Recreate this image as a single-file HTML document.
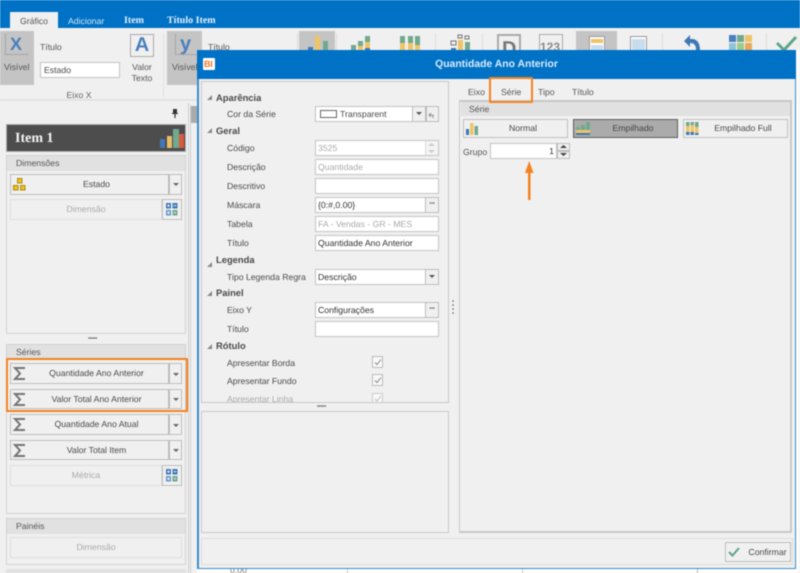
<!DOCTYPE html>
<html><head><meta charset="utf-8">
<style>
html,body{margin:0;padding:0}
body{width:800px;height:573px;overflow:hidden;background:#f0f0f0;position:relative;font:8.7px "Liberation Sans",sans-serif;color:#4a4a4a;text-rendering:geometricPrecision}
#w{position:absolute;left:0;top:0;width:800px;height:573px;overflow:hidden;filter:blur(.4px)}
.a,.t{position:absolute;box-sizing:border-box}
.t{white-space:nowrap;line-height:12px}
.c{text-align:center}
.b{font-weight:bold;font-size:9.4px}
.box{position:absolute;box-sizing:border-box;background:#fff;border:1px solid #c4c4c4;line-height:15px;padding-left:2px;white-space:nowrap}
.btn{position:absolute;box-sizing:border-box;background:#f0f0f0;border:1px solid #bcbcbc;text-align:center;white-space:nowrap}
.dis{color:#aaa}
.dots{line-height:13px!important;font-size:6px;letter-spacing:-.3px;color:#777}
svg{position:absolute;display:block}
</style></head><body><div id="w">

<!-- top -->
<div class="a" style="left:0;top:0;width:800px;height:28px;background:#0072c6"></div>
<div class="a" style="left:10px;top:12px;width:48px;height:17px;background:#f0f0f0"></div>
<div class="t c" style="left:10px;top:15px;width:48px;color:#555">Gráfico</div>
<div class="t" style="left:68px;top:15px;color:#cfe4f5">Adicionar</div>
<div class="t b" style="left:124px;top:15px;color:#e4f0fa;font-family:'Liberation Serif',serif;font-size:10px">Item</div>
<div class="t b" style="left:167px;top:15px;color:#e4f0fa;font-family:'Liberation Serif',serif;font-size:10px">Título Item</div>

<!-- ribbon -->
<div class="a" style="left:0;top:28px;width:800px;height:73px;background:#f0f0f0;border-bottom:2px solid #e4e4e4"></div>
<div class="a" style="left:0;top:31px;width:34px;height:54px;background:#c4c4c4"></div>
<div class="t b" style="left:10px;top:32px;font-size:18px;line-height:24px;color:#4a80bd">X</div>
<div class="a" style="left:5px;top:34px;width:23px;height:21px;border-left:1px dotted #888;border-bottom:1px dotted #888"></div>
<div class="t" style="left:4px;top:61px;color:#555">Visível</div>
<div class="t" style="left:40px;top:41px;color:#555">Título</div>
<div class="box" style="left:40px;top:62px;width:80px;height:16px;padding-left:3px;line-height:14px">Estado</div>
<div class="a" style="left:130px;top:34px;width:24px;height:23px;border:1px solid #aaa"></div>
<div class="t c b" style="left:130px;top:33px;width:24px;font-size:20px;line-height:24px;color:#4a80bd">A</div>
<div class="t c" style="left:125px;top:62px;width:34px;line-height:11px;color:#555">Valor<br>Texto</div>
<div class="t c" style="left:40px;top:89px;width:78px;color:#666">Eixo X</div>
<div class="a" style="left:163px;top:33px;width:1px;height:64px;background:#e0e0e0"></div>
<div class="a" style="left:167px;top:31px;width:35px;height:54px;background:#c4c4c4"></div>
<div class="t b" style="left:180px;top:31px;font-size:20px;line-height:26px;color:#4a80bd">y</div>
<div class="a" style="left:175px;top:34px;width:23px;height:21px;border-left:1px dotted #888;border-bottom:1px dotted #888"></div>
<div class="t" style="left:172px;top:61px;color:#555">Visível</div>
<div class="t" style="left:208px;top:41px;color:#555">Título</div>

<div class="a" style="left:299px;top:31px;width:36px;height:24px;background:#c4c4c4"></div>
<svg style="left:300px;top:34px" width="320" height="18">
<rect x="8" y="13" width="5" height="4" fill="#3f78b5"/><rect x="15" y="2" width="5" height="15" fill="#efc466"/><rect x="23" y="7" width="5" height="10" fill="#71a98f"/>
<rect x="51" y="11" width="5" height="6" fill="#71a98f"/><rect x="58" y="7" width="5" height="5" fill="#71a98f"/><rect x="58" y="12" width="5" height="5" fill="#efc466"/><rect x="65" y="2" width="5" height="6" fill="#71a98f"/><rect x="65" y="8" width="5" height="6" fill="#efc466"/><rect x="65" y="14" width="5" height="3" fill="#3f78b5"/>
<rect x="100" y="2" width="5" height="7" fill="#71a98f"/><rect x="100" y="9" width="5" height="8" fill="#efc466"/><rect x="108" y="2" width="5" height="7" fill="#71a98f"/><rect x="108" y="9" width="5" height="8" fill="#efc466"/><rect x="115" y="2" width="5" height="9" fill="#71a98f"/><rect x="115" y="11" width="5" height="6" fill="#efc466"/>
<rect x="151" y="14" width="5" height="3" fill="#3f78b5"/><rect x="158" y="6" width="5" height="11" fill="#efc466"/><rect x="165" y="8" width="5" height="9" fill="#71a98f"/>
<rect x="151" y="7" width="5" height="4" fill="none" stroke="#777"/><rect x="158" y="1" width="4" height="3" fill="none" stroke="#777"/><rect x="165" y="2" width="4" height="3" fill="none" stroke="#777"/>
</svg>
<div class="a" style="left:297px;top:33px;width:1px;height:22px;background:#ddd"></div>
<div class="a" style="left:336px;top:33px;width:1px;height:22px;background:#ddd"></div>
<div class="a" style="left:435px;top:33px;width:1px;height:22px;background:#ddd"></div>
<div class="a" style="left:482px;top:33px;width:1px;height:22px;background:#ddd"></div>
<div class="a" style="left:497px;top:34px;width:24px;height:22px;border:2px solid #aaa"></div>
<div class="t b" style="left:502px;top:38px;font-size:20px;line-height:22px;color:#777">D</div>
<div class="a" style="left:539px;top:34px;width:24px;height:22px;border:1px solid #aaa"></div>
<div class="t b" style="left:540px;top:40px;font-size:12px;color:#888;line-height:14px">123</div>
<div class="a" style="left:576px;top:31px;width:41px;height:24px;background:#c4c4c4"></div>
<div class="a" style="left:589px;top:36px;width:16px;height:20px;background:#fff;border:1px solid #999"></div>
<div class="a" style="left:591px;top:39px;width:12px;height:4px;background:#efc466"></div>
<div class="a" style="left:591px;top:45px;width:12px;height:11px;background:#c7dced"></div>
<div class="a" style="left:630px;top:36px;width:17px;height:20px;background:#fff;border:1px solid #999"></div>
<div class="a" style="left:632px;top:39px;width:13px;height:16px;background:#c7dced"></div>
<div class="a" style="left:662px;top:33px;width:1px;height:22px;background:#ddd"></div>
<div class="a" style="left:766px;top:33px;width:1px;height:22px;background:#ddd"></div>
<svg style="left:680px;top:34px" width="120" height="18">
<path d="M4 7 L10 1 V5 H12 C17 5 20 9 20 16 H16 C16 11 14 9 10 9 V13 Z" fill="#3f78b5"/>
<rect x="49" y="1" width="7" height="7" fill="#4a80bd"/><rect x="57" y="1" width="7" height="7" fill="#71a98f"/><rect x="65" y="1" width="7" height="7" fill="#efc466"/>
<rect x="49" y="9" width="7" height="8" fill="#8fc3d8"/><rect x="57" y="9" width="7" height="8" fill="#9ecb85"/><rect x="65" y="9" width="7" height="8" fill="#e8a75a"/>
<path d="M97 9 L104 16 L116 3" fill="none" stroke="#5fa68a" stroke-width="3"/>
</svg>

<!-- left panel -->
<div class="a" style="left:0;top:101px;width:190px;height:472px;background:#f0f0f0"></div>
<div class="a" style="left:188px;top:103px;width:1px;height:470px;background:#d0d0d0"></div>
<div class="a" style="left:190px;top:105px;width:7px;height:468px;background:#f0f0f0;border-left:1px solid #d0d0d0"></div>
<div class="a" style="left:191px;top:106px;width:6px;height:17px;background:#aaa"></div>
<svg style="left:171px;top:109px" width="8" height="9"><path d="M2 0H6V4H7V5H4.6V9H3.4V5H1V4H2Z" fill="#333"/></svg>

<div class="a" style="left:6px;top:124px;width:180px;height:28px;background:#4d4d4d;border:1px solid #aaa"></div>
<div class="t" style="left:15px;top:131px;font:bold 14px 'Liberation Serif',serif;line-height:15px;color:#f4f4f4">Item 1</div>
<svg style="left:159px;top:126px" width="26" height="24">
<rect x="1" y="13" width="5" height="9" fill="#3f78b5"/><rect x="8" y="10" width="5" height="12" fill="#e9be6a"/><rect x="14" y="3" width="6" height="19" fill="#71a98f"/><rect x="20" y="8" width="5" height="14" fill="#d95b3c"/>
</svg>

<!-- Dimensoes -->
<div class="a" style="left:6px;top:155px;width:180px;height:179px;border:1px solid #d2d2d2;background:#f0f0f0"></div>
<div class="a" style="left:7px;top:156px;width:178px;height:15px;background:#e1e1e1"></div>
<div class="t" style="left:16px;top:157px;color:#555">Dimensões</div>

<div class="btn" style="left:10px;top:174px;width:159px;height:21px;line-height:19px;padding-left:14px">Estado</div>
<div class="btn" style="left:169px;top:174px;width:13px;height:21px"></div>
<svg style="left:13px;top:178px" width="14" height="13"><rect x="4.5" y=".5" width="4.5" height="4.5" fill="#f2c511" stroke="#a88a20"/><rect x=".5" y="7.5" width="4.5" height="4.5" fill="#f2c511" stroke="#a88a20"/><rect x="7.5" y="7.5" width="4.5" height="4.5" fill="#f2c511" stroke="#a88a20"/></svg>
<svg style="left:173px;top:183px" width="6" height="4"><path d="M0 0H6L3 3Z" fill="#666"/></svg>
<div class="btn dis" style="left:10px;top:199px;width:152px;height:21px;line-height:19px;border-color:#ddd">Dimensão</div>
<div class="btn" style="left:162px;top:199px;width:20px;height:21px"></div>
<svg style="left:165px;top:203px" width="14" height="13"><rect x="1" y="0" width="5" height="5.5" fill="#3f78b5"/><rect x="7.5" y="0" width="5" height="5.5" fill="#3f78b5"/><rect x="1" y="7" width="5" height="5.5" fill="#5f93c8"/><rect x="7.5" y="7" width="5" height="5.5" fill="#71a98f"/><path d="M2.2 2.7H4.8M3.5 1.4V4M8.7 2.7H11.3M2.4 8.4L4.6 11M4.6 8.4L2.4 11M8.9 9.7H11" stroke="#fff" stroke-width=".8"/></svg>

<div class="t" style="left:88px;top:336px;color:#666;font-size:6px;letter-spacing:-.3px;line-height:6px">•••••</div>

<!-- Series -->
<div class="a" style="left:6px;top:344px;width:180px;height:170px;border:1px solid #d2d2d2;background:#f0f0f0"></div>
<div class="a" style="left:7px;top:345px;width:178px;height:15px;background:#e1e1e1"></div>
<div class="t" style="left:16px;top:346px;color:#555">Séries</div>

<div class="btn" style="left:10px;top:363px;width:159px;height:21px;line-height:19px;padding-left:14px">Quantidade Ano Anterior</div>
<div class="btn" style="left:169px;top:363px;width:13px;height:21px"></div>
<div class="btn" style="left:10px;top:389px;width:159px;height:20px;line-height:18px;padding-left:14px">Valor Total Ano Anterior</div>
<div class="btn" style="left:169px;top:389px;width:13px;height:20px"></div>
<div class="btn" style="left:10px;top:414px;width:159px;height:21px;line-height:19px;padding-left:14px">Quantidade Ano Atual</div>
<div class="btn" style="left:169px;top:414px;width:13px;height:21px"></div>
<div class="btn" style="left:10px;top:440px;width:159px;height:20px;line-height:18px;padding-left:14px">Valor Total Item</div>
<div class="btn" style="left:169px;top:440px;width:13px;height:20px"></div>
<svg style="left:0;top:360px" width="190" height="105">
<g fill="none" stroke="#757575" stroke-width="2"><path d="M25 8H15L20 13.5L15 19H25"/><path d="M25 34H15L20 39.5L15 45H25"/><path d="M25 59H15L20 64.5L15 70H25"/><path d="M25 85H15L20 90.5L15 96H25"/></g>
<path d="M173 13H179L176 16ZM173 38H179L176 41ZM173 64H179L176 67ZM173 89H179L176 92Z" fill="#666"/>
</svg>
<div class="btn dis" style="left:10px;top:465px;width:152px;height:21px;line-height:19px;border-color:#ddd">Métrica</div>
<div class="btn" style="left:162px;top:465px;width:20px;height:21px"></div>
<svg style="left:165px;top:469px" width="14" height="13"><rect x="1" y="0" width="5" height="5.5" fill="#3f78b5"/><rect x="7.5" y="0" width="5" height="5.5" fill="#3f78b5"/><rect x="1" y="7" width="5" height="5.5" fill="#5f93c8"/><rect x="7.5" y="7" width="5" height="5.5" fill="#71a98f"/><path d="M2.2 2.7H4.8M3.5 1.4V4M8.7 2.7H11.3M2.4 8.4L4.6 11M4.6 8.4L2.4 11M8.9 9.7H11" stroke="#fff" stroke-width=".8"/></svg>

<!-- orange highlight left -->
<div class="a" style="left:6px;top:358px;width:182px;height:54px;border:2px solid #f58220;border-radius:1px"></div>

<!-- Paineis -->
<div class="a" style="left:6px;top:518px;width:180px;height:47px;border:1px solid #d2d2d2"></div>
<div class="a" style="left:7px;top:519px;width:178px;height:15px;background:#e1e1e1"></div>
<div class="t" style="left:16px;top:520px;color:#555">Painéis</div>
<div class="btn dis" style="left:10px;top:537px;width:172px;height:21px;line-height:19px;border-color:#ddd">Dimensão</div>
<div class="a" style="left:6px;top:569px;width:180px;height:4px;background:#e1e1e1"></div>

<!-- background chart strip at bottom/right -->
<div class="a" style="left:197px;top:568px;width:603px;height:5px;background:#fff"></div>
<div class="a" style="left:796px;top:50px;width:4px;height:523px;background:#fbfbfb"></div>
<div class="a" style="left:697px;top:568px;width:1px;height:5px;background:#bbb"></div>
<div class="a" style="left:347px;top:568px;width:1px;height:5px;background:#ccc"></div>
<div class="a" style="left:522px;top:568px;width:1px;height:5px;background:#ccc"></div>
<div class="t" style="left:230px;top:564px;color:#777">0,00</div>

<!-- dialog -->
<div class="a" style="left:197px;top:50px;width:599px;height:519px;background:#f0f0f0;border:1px solid #3d8ccb;border-left-width:2px"></div>
<div class="a" style="left:197px;top:50px;width:599px;height:29px;background:#0072c6"></div>
<div class="a" style="left:203px;top:58px;width:12px;height:12px;background:#fff;border-radius:1px"></div>
<div class="t b" style="left:204px;top:58px;width:10px;font-size:9px;color:#f07828;line-height:12px;letter-spacing:-.2px">BI</div>
<div class="t b c" style="left:197px;top:59px;width:599px;font-size:10.4px;color:#d8eafa">Quantidade Ano Anterior</div>

<!-- props panel -->
<div class="a" style="left:201px;top:81px;width:248px;height:322px;border:1px solid #c8c8c8;overflow:hidden;background:#f0f0f0"></div>
<svg style="left:207px;top:95px" width="6" height="260"><path d="M5 0V5H0Z M5 33V38H0Z M5 167V172H0Z M5 196V201H0Z M5 249V254H0Z" fill="#888"/></svg>
<div class="t b" style="left:216px;top:92px">Aparência</div>
<div class="t" style="left:227px;top:108px">Cor da Série</div>
<div class="box" style="left:315px;top:106px;width:124px;height:16px;padding-left:24px;line-height:14px">Transparent</div>
<div class="a" style="left:320px;top:110px;width:17px;height:8px;background:#fff;border:1px solid #666"></div>
<div class="btn" style="left:412px;top:106px;width:14px;height:16px"></div>
<div class="btn" style="left:426px;top:106px;width:13px;height:16px"></div>
<svg style="left:416px;top:112px" width="20" height="8"><path d="M0 0H6L3 3Z" fill="#555"/><path d="M13 3H17V6M13 3L15 1M13 3L15 5" stroke="#777" fill="none" stroke-width=".8"/></svg>

<div class="t b" style="left:216px;top:125px">Geral</div>
<div class="t" style="left:227px;top:142px">Código</div>
<div class="box dis" style="left:315px;top:140px;width:124px;height:16px;line-height:14px">3525</div>
<div class="a" style="left:425px;top:141px;width:13px;height:14px;background:#f4f4f4;border-left:1px solid #ddd"></div>
<svg style="left:428px;top:143px" width="7" height="10"><path d="M0 3L3.5 0L7 3ZM0 7H7L3.5 10Z" fill="#ccc"/></svg>
<div class="t" style="left:227px;top:161px">Descrição</div>
<div class="box dis" style="left:315px;top:159px;width:124px;height:16px;line-height:14px">Quantidade</div>
<div class="t" style="left:227px;top:180px">Descritivo</div>
<div class="box" style="left:315px;top:178px;width:124px;height:16px"></div>
<div class="t" style="left:227px;top:199px">Máscara</div>
<div class="box" style="left:315px;top:197px;width:124px;height:16px;line-height:14px;color:#333">{0:#,0.00}</div>
<div class="btn dots" style="left:425px;top:197px;width:14px;height:16px">•••</div>
<div class="t" style="left:227px;top:218px">Tabela</div>
<div class="box dis" style="left:315px;top:216px;width:124px;height:16px;line-height:14px">FA - Vendas - GR - MES</div>
<div class="t" style="left:227px;top:237px">Título</div>
<div class="box" style="left:315px;top:235px;width:124px;height:16px;line-height:14px;color:#333">Quantidade Ano Anterior</div>

<div class="t b" style="left:216px;top:254px">Legenda</div>
<div class="t" style="left:227px;top:271px">Tipo Legenda Regra</div>
<div class="box" style="left:315px;top:269px;width:124px;height:16px;line-height:14px;color:#333">Descrição</div>
<div class="btn" style="left:425px;top:269px;width:14px;height:16px"></div>
<svg style="left:429px;top:275px" width="6" height="4"><path d="M0 0H6L3 3Z" fill="#555"/></svg>

<div class="t b" style="left:216px;top:287px">Painel</div>
<div class="t" style="left:227px;top:304px">Eixo Y</div>
<div class="box" style="left:315px;top:302px;width:124px;height:16px;line-height:14px;color:#333">Configurações</div>
<div class="btn dots" style="left:425px;top:302px;width:14px;height:16px">•••</div>
<div class="t" style="left:227px;top:323px">Título</div>
<div class="box" style="left:315px;top:321px;width:124px;height:16px"></div>

<div class="t b" style="left:216px;top:340px">Rótulo</div>
<div class="t" style="left:227px;top:357px">Apresentar Borda</div>
<div class="t" style="left:227px;top:375px">Apresentar Fundo</div>
<div class="a" style="left:372px;top:356px;width:11px;height:12px;background:#f8f8f8;border:1px solid #bbb"></div>
<div class="a" style="left:372px;top:374px;width:11px;height:12px;background:#f8f8f8;border:1px solid #bbb"></div>
<div class="a" style="left:372px;top:393px;width:11px;height:9px;background:#f8f8f8;border:1px solid #ccc;border-bottom:0"></div>
<svg style="left:372px;top:356px" width="12" height="46"><path d="M3 6.5L5 8.5L9 3.5M3 24.5L5 26.5L9 21.5" stroke="#888" fill="none"/><path d="M3 43L5 45L9 40" stroke="#bbb" fill="none"/></svg>
<div class="a" style="left:202px;top:393px;width:160px;height:9px;overflow:hidden"><div class="t" style="left:25px;top:0;line-height:12px;color:#aaa">Apresentar Linha</div></div>

<div class="t" style="left:317px;top:404px;color:#666;font-size:6px;letter-spacing:-.3px;line-height:6px">•••••</div>
<div class="a" style="left:201px;top:411px;width:248px;height:122px;border:1px solid #c8c8c8"></div>
<div class="t" style="left:452px;top:300px;color:#666;font-size:6px;line-height:4px;width:4px">•<br>•<br>•<br>•</div>

<!-- right tabs -->
<div class="t" style="left:468px;top:86px;color:#555">Eixo</div>
<div class="t" style="left:501px;top:86px;color:#555">Série</div>
<div class="t" style="left:538px;top:86px;color:#555">Tipo</div>
<div class="t" style="left:572px;top:86px;color:#555">Título</div>
<div class="a" style="left:459px;top:100px;width:333px;height:433px;border:1px solid #c8c8c8;border-width:2px 2px 2px 1px"></div>
<div class="a" style="left:461px;top:102px;width:329px;height:14px;background:#e1e1e1"></div>
<div class="t" style="left:469px;top:103px;color:#555">Série</div>
<div class="btn" style="left:463px;top:119px;width:105px;height:19px;line-height:17px;padding-left:15px;border-color:#c0c0c0">Normal</div>
<div class="btn" style="left:573px;top:119px;width:105px;height:19px;line-height:17px;padding-left:15px;background:#ababab;border-color:#5d5d5d;color:#444">Empilhado</div>
<div class="btn" style="left:683px;top:119px;width:105px;height:19px;line-height:17px;padding-left:15px;border-color:#c0c0c0">Empilhado Full</div>
<svg style="left:463px;top:119px" width="320" height="19">
<rect x="3" y="10" width="3" height="6" fill="#3f78b5"/><rect x="7" y="4" width="3.5" height="12" fill="#efc466"/><rect x="11.5" y="7" width="3.5" height="9" fill="#71a98f"/>
<path d="M113 14H127V16H113Z" fill="#3f78b5"/><path d="M113 11H127V14H113Z" fill="#efc466"/><rect x="113" y="8" width="4" height="3" fill="#71a98f"/><rect x="118" y="6" width="4" height="5" fill="#71a98f"/><rect x="123" y="3" width="4" height="8" fill="#71a98f"/>
<rect x="223" y="3" width="3.5" height="4" fill="#71a98f"/><rect x="223" y="7" width="3.5" height="6" fill="#efc466"/><rect x="223" y="13" width="3.5" height="3" fill="#3f78b5"/><rect x="227.5" y="3" width="3.5" height="3" fill="#71a98f"/><rect x="227.5" y="6" width="3.5" height="7" fill="#efc466"/><rect x="227.5" y="13" width="3.5" height="3" fill="#3f78b5"/><rect x="232" y="3" width="3.5" height="5" fill="#71a98f"/><rect x="232" y="8" width="3.5" height="6" fill="#efc466"/><rect x="232" y="14" width="3.5" height="2" fill="#3f78b5"/>
</svg>
<div class="t" style="left:463px;top:146px;color:#555">Grupo</div>
<div class="box" style="left:490px;top:143px;width:67px;height:16px;text-align:right;padding-right:2px;line-height:14px;color:#333">1</div>
<div class="btn" style="left:557px;top:143px;width:13px;height:8px"></div>
<div class="btn" style="left:557px;top:151px;width:13px;height:8px"></div>
<svg style="left:560px;top:145px" width="7" height="12"><path d="M0 3L3.5 0L7 3ZM0 8H7L3.5 11Z" fill="#444"/></svg>

<!-- orange annotations -->
<div class="a" style="left:489px;top:77px;width:44px;height:26px;border:2px solid #f58220;border-radius:1px"></div>
<svg style="left:522px;top:160px" width="14" height="42"><path d="M6 5H8.5V40H6Z M7.2 1L11.5 13H3Z" fill="#f58220"/></svg>

<!-- footer -->
<div class="a" style="left:201px;top:538px;width:592px;height:27px;border:1px solid #dcdcdc"></div>
<div class="btn" style="left:725px;top:542px;width:66px;height:20px;line-height:18px;padding-left:19px;border-color:#bcbcbc">Confirmar</div>
<svg style="left:728px;top:546px" width="13" height="12"><path d="M1 6L4.5 9.5L11 2" stroke="#5fa68a" stroke-width="2" fill="none"/></svg>

</div></body></html>
